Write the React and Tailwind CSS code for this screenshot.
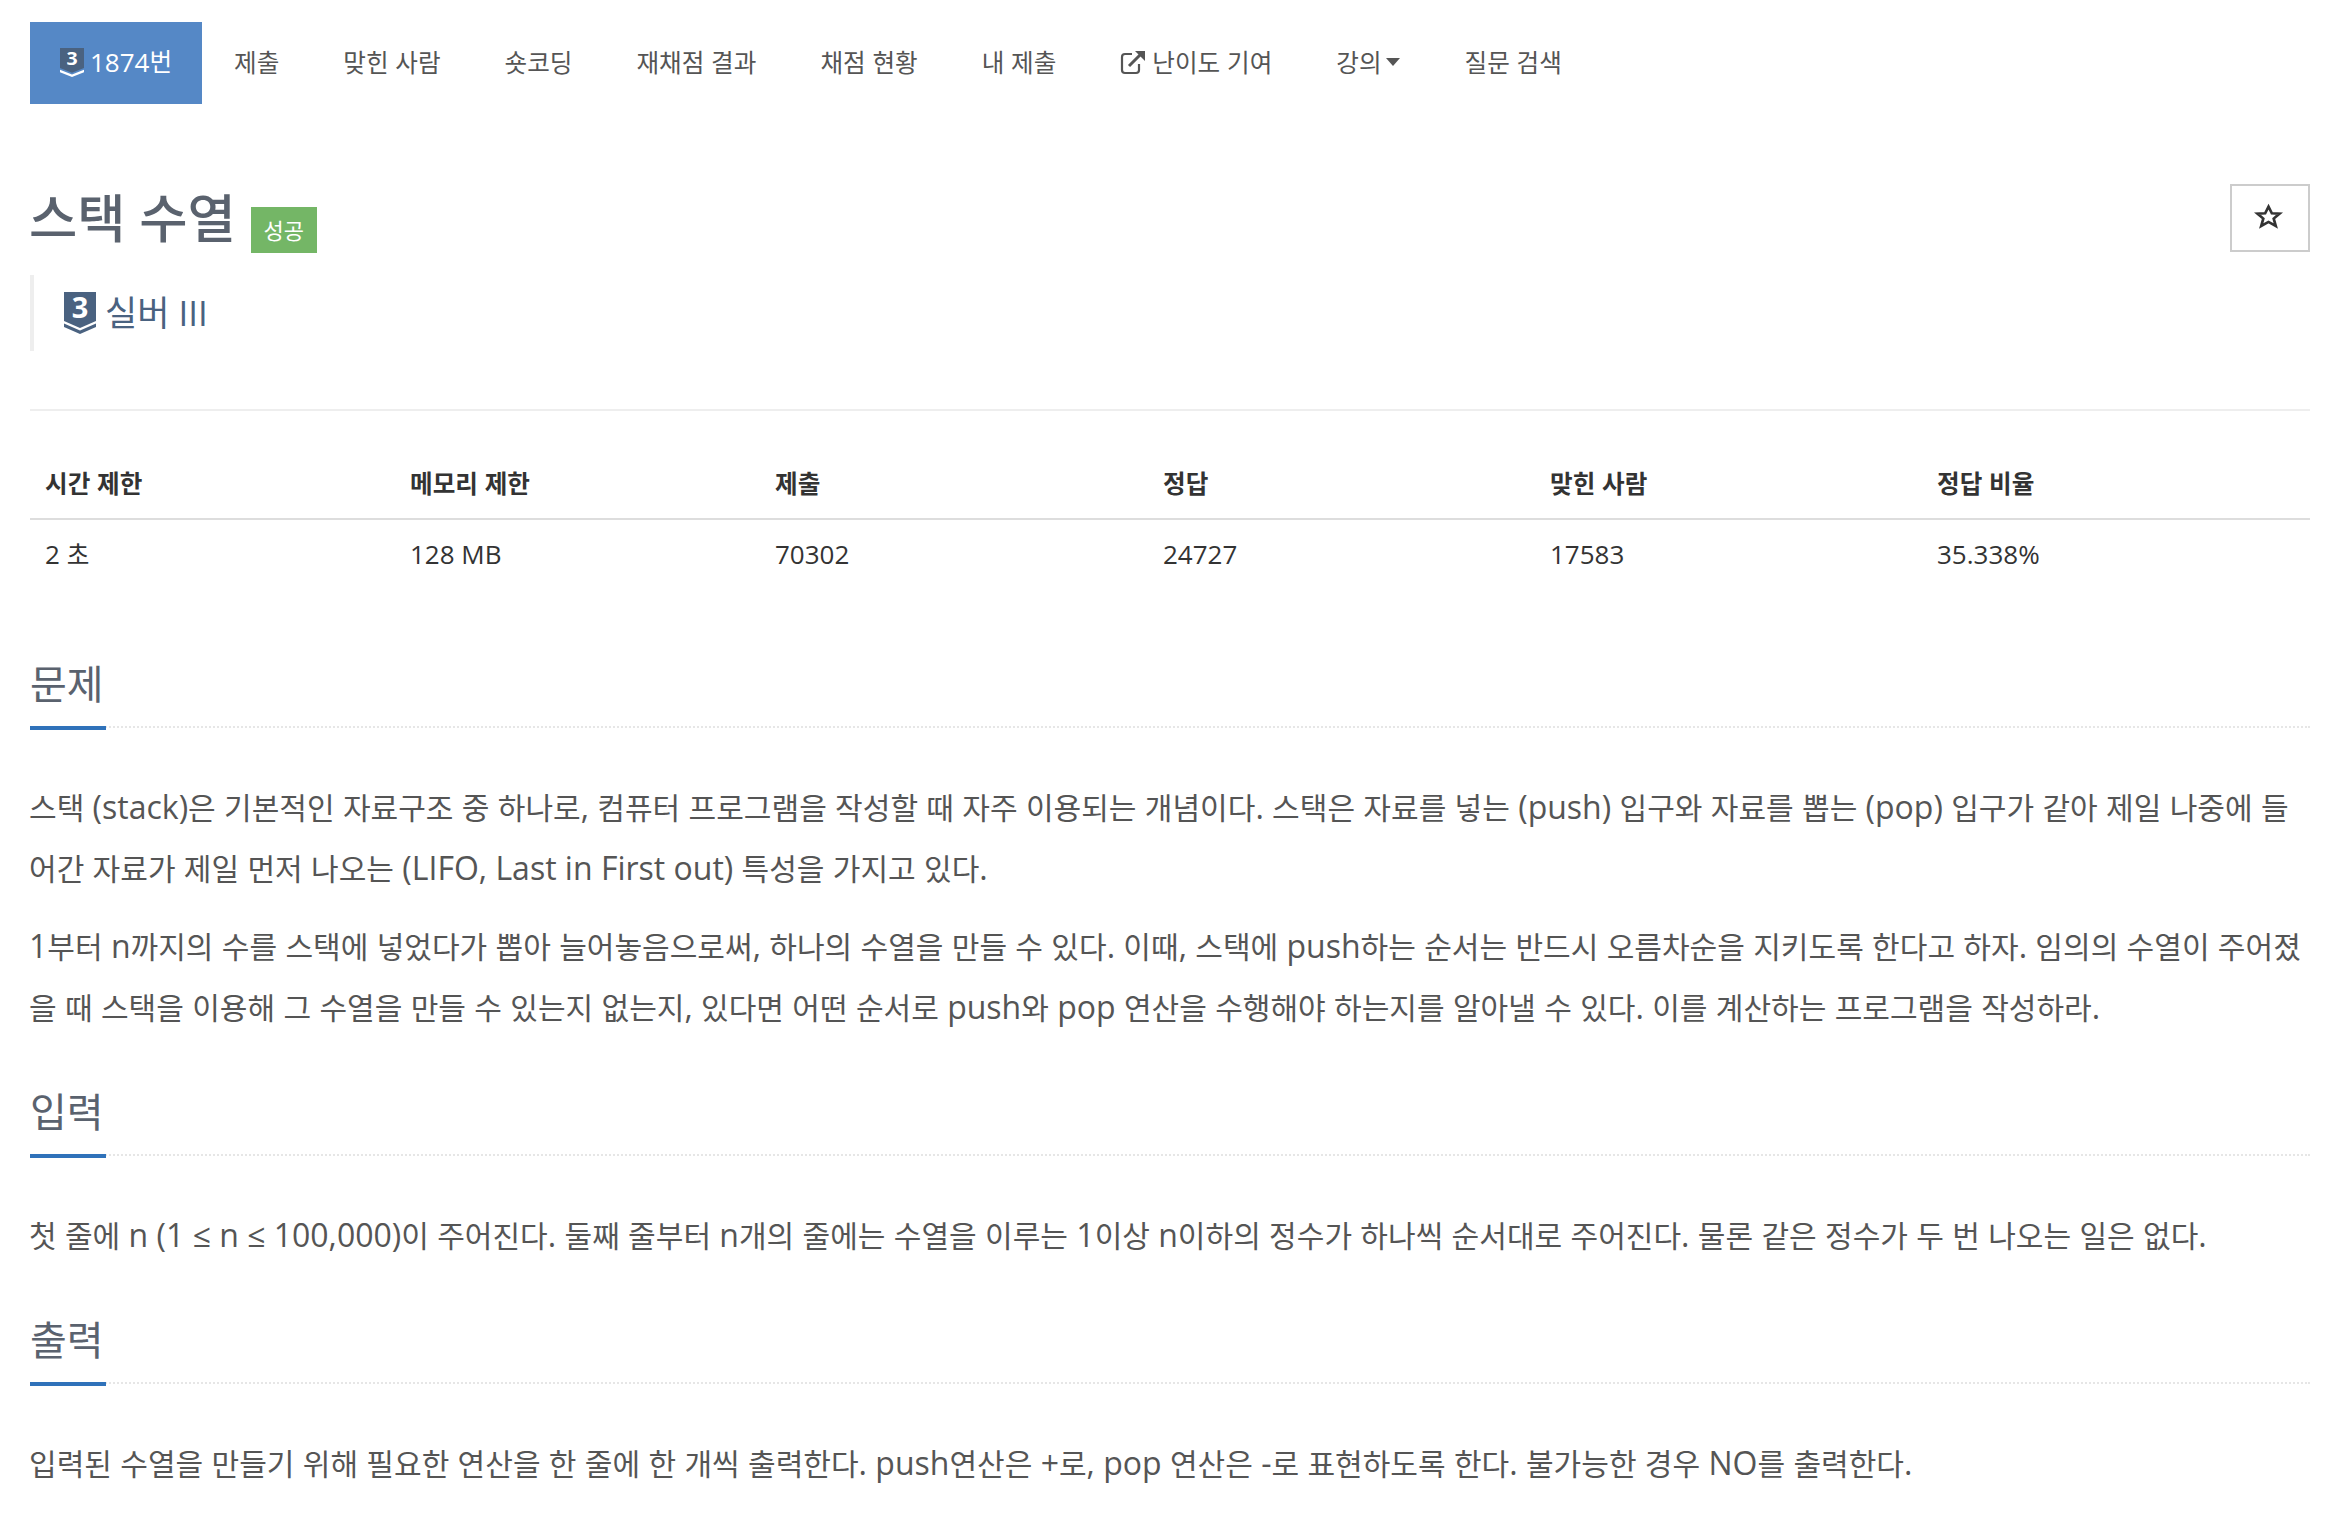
const F = "[font-family:'Open_Sans','Noto_Sans_CJK_KR',sans-serif]";

// Hangul runs are set a little smaller than the Latin text around them.
function K({ s, c }) {
  return (
    <span>
      {s.split(/([가-힣]+)/).map((part, i) =>
        i % 2 === 1 ? <span key={i} className={c}>{part}</span> : part
      )}
    </span>
  );
}

function Tier({ className, chevron, size, y }) {
  return (
    <svg viewBox="0 0 32 42" preserveAspectRatio="none" className={className}>
      <path d="M0 0H32V29L16 36L0 29Z" fill="#4a6280" />
      <path d="M0 31.5L16 38.5L32 31.5V35L16 42L0 35Z" fill={chevron} />
      <text x="16" y={y} textAnchor="middle" fontSize={size} fontWeight="700" fill="#fff" fontFamily="'Open Sans',sans-serif">3</text>
    </svg>
  );
}

function Tab({ children }) {
  return <a className="flex items-center px-[32px] pb-[2px] h-[82px] text-[26px] text-[#555] whitespace-nowrap">{children}</a>;
}

function Section({ title, children }) {
  return (
    <section>
      <div className="relative h-[68px] border-b-2 border-dotted border-[#e6e6e6]">
        <h2 className="absolute left-0 top-0 w-[76px] h-[70px] border-b-4 border-[#2f72ba] text-[40px] leading-[48px] text-[#5a626e] whitespace-nowrap">{title}</h2>
      </div>
      <div className="pt-[49px] -ml-[1px] text-[32px] leading-[60px] text-[#555]">{children}</div>
    </section>
  );
}

const H = 'text-[30.06px]';

export default function App() {
  const head = ['시간 제한', '메모리 제한', '제출', '정답', '맞힌 사람', '정답 비율'];
  const vals = ['2 초', '128 MB', '70302', '24727', '17583', '35.338%'];
  const widths = ['w-[365px]', 'w-[365px]', 'w-[388px]', 'w-[387px]', 'w-[387px]', 'w-[388px]'];
  const N = 'text-[24.6px]';
  return (
    <div className={`${F} w-[2340px] h-[1516px] overflow-hidden bg-white px-[30px] pt-[22px]`}>
      <nav className="flex h-[82px]">
        <a className="flex items-center w-[172px] h-[82px] bg-[#5588c6] pl-[30px] pb-[2px] text-[26px] text-white whitespace-nowrap">
          <Tier className="w-[24px] h-[29px] mr-[6px]" chevron="#fff" size={26} y={25} />1874<span className={N}>번</span>
        </a>
        <Tab><K c={N} s="제출" /></Tab>
        <Tab><K c={N} s="맞힌 사람" /></Tab>
        <Tab><K c={N} s="숏코딩" /></Tab>
        <Tab><K c={N} s="재채점 결과" /></Tab>
        <Tab><K c={N} s="채점 현황" /></Tab>
        <Tab><K c={N} s="내 제출" /></Tab>
        <Tab>
          <svg viewBox="0 0 26 26" className="w-[26px] h-[26px] mr-[6px]" fill="none" stroke="#555" strokeWidth="2.2">
            <path d="M12 5H5a3 3 0 0 0-3 3v13a3 3 0 0 0 3 3h11a3 3 0 0 0 3-3v-6" />
            <path d="M9 17L21 5" strokeWidth="3" />
            <path d="M15 2H25V12Z" fill="#555" stroke="none" />
          </svg>
          <K c={N} s="난이도 기여" />
        </Tab>
        <Tab>
          <K c={N} s="강의" />
          <svg viewBox="0 0 14 8" className="w-[16px] h-[8px] ml-[3px]"><path d="M0 0H14L7 8Z" fill="#555" /></svg>
        </Tab>
        <Tab><K c={N} s="질문 검색" /></Tab>
      </nav>

      <div className="flex justify-between mt-[80px]">
        <h1 className="flex items-start -ml-[1px] text-[52.5px] leading-[56px] font-medium text-[#5a626e] pt-[6px]">
          스택 수열
          <span className="ml-[15px] mt-[17px] w-[66px] h-[46px] flex items-center justify-center bg-[#74b666] text-white text-[22px] font-normal">성공</span>
        </h1>
        <button className="w-[80px] h-[68px] border-2 border-[#ccc] flex items-center justify-center">
          <svg viewBox="0 0 28 26" className="w-[31px] h-[29px] mb-[6px] mr-[4px]" fill="none" stroke="#333" strokeWidth="2.4" strokeLinejoin="miter">
            <path d="M14 5L17 11L24 11.3L18.7 15.8L20.6 22.5L14 18.8L7.4 22.5L9.3 15.8L4 11.3L11 11Z" />
          </svg>
        </button>
      </div>

      <div className="flex items-center h-[76px] mt-[22px] border-l-4 border-[#eee] pl-[30px] text-[35px] text-[#4a6280]">
        <Tier className="w-[32px] h-[42px] mr-[9px]" chevron="#4a6280" size={29} y={26} />
        실버 III
      </div>

      <div className="h-[2px] bg-[#eee] mt-[58px]" />

      <table className="mt-[28px] w-[2280px] table-fixed text-[26px] text-[#333]">
        <thead>
          <tr className="border-b-2 border-[#ddd] h-[80px]">
            {head.map((h, i) => <th key={h} className={`${widths[i]} text-left font-bold px-[15px] align-bottom pb-[15px]`}><K c={N} s={h} /></th>)}
          </tr>
        </thead>
        <tbody>
          <tr className="h-[70px]">
            {vals.map((v) => <td key={v} className="px-[15px]"><K c={N} s={v} /></td>)}
          </tr>
        </tbody>
      </table>

      <div className="mt-[71px] flex flex-col gap-[50px]">
        <Section title="문제">
          <p><K c={H} s="스택 (stack)은 기본적인 자료구조 중 하나로, 컴퓨터 프로그램을 작성할 때 자주 이용되는 개념이다. 스택은 자료를 넣는 (push) 입구와 자료를 뽑는 (pop) 입구가 같아 제일 나중에 들어간 자료가 제일 먼저 나오는 (LIFO, Last in First out) 특성을 가지고 있다." /></p>
          <p className="mt-[17px]"><K c={H} s="1부터 n까지의 수를 스택에 넣었다가 뽑아 늘어놓음으로써, 하나의 수열을 만들 수 있다. 이때, 스택에 push하는 순서는 반드시 오름차순을 지키도록 한다고 하자. 임의의 수열이 주어졌을 때 스택을 이용해 그 수열을 만들 수 있는지 없는지, 있다면 어떤 순서로 push와 pop 연산을 수행해야 하는지를 알아낼 수 있다. 이를 계산하는 프로그램을 작성하라." /></p>
        </Section>
        <Section title="입력">
          <p><K c={H} s="첫 줄에 n (1 ≤ n ≤ 100,000)이 주어진다. 둘째 줄부터 n개의 줄에는 수열을 이루는 1이상 n이하의 정수가 하나씩 순서대로 주어진다. 물론 같은 정수가 두 번 나오는 일은 없다." /></p>
        </Section>
        <Section title="출력">
          <p><K c={H} s="입력된 수열을 만들기 위해 필요한 연산을 한 줄에 한 개씩 출력한다. push연산은 +로, pop 연산은 -로 표현하도록 한다. 불가능한 경우 NO를 출력한다." /></p>
        </Section>
      </div>
    </div>
  );
}
